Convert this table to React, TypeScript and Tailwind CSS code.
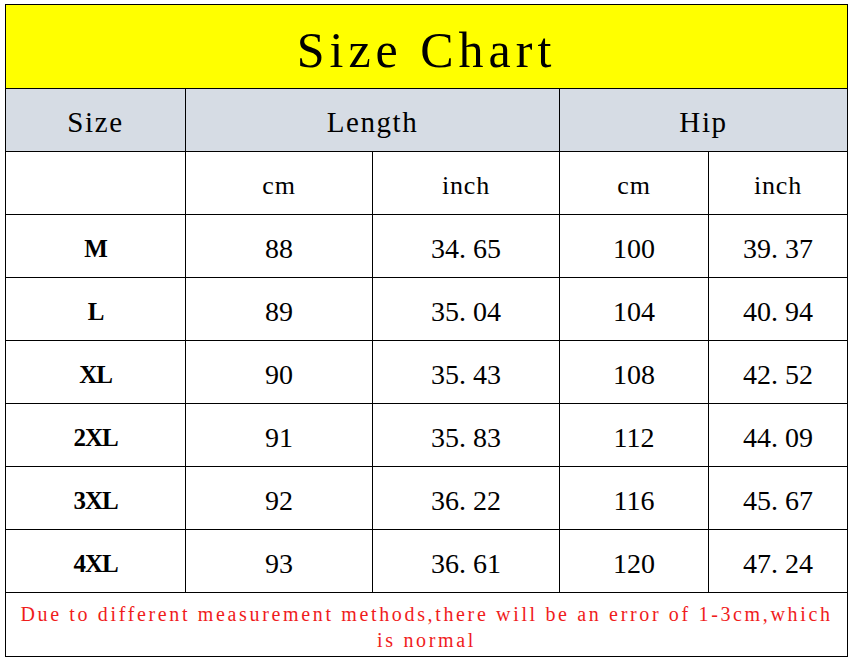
const rows = [
  { size: "M", lenCm: "88", lenIn: "34.65", hipCm: "100", hipIn: "39.37" },
  { size: "L", lenCm: "89", lenIn: "35.04", hipCm: "104", hipIn: "40.94" },
  { size: "XL", lenCm: "90", lenIn: "35.43", hipCm: "108", hipIn: "42.52" },
  { size: "2XL", lenCm: "91", lenIn: "35.83", hipCm: "112", hipIn: "44.09" },
  { size: "3XL", lenCm: "92", lenIn: "36.22", hipCm: "116", hipIn: "45.67" },
  { size: "4XL", lenCm: "93", lenIn: "36.61", hipCm: "120", hipIn: "47.24" },
];

const serif = "font-['Liberation_Serif',serif]";

// decimal with the wide full-width-style dot
function Decimal({ value }: { value: string }) {
  const [a, b] = value.split(".");
  return (
    <span>
      {a}
      <span className="inline-block w-[14px] text-left">.</span>
      {b}
    </span>
  );
}

const cell = "border border-black text-center align-middle p-0";
const head = `${cell} ${serif} text-[29px] tracking-[1.6px] pt-[5px]`;
const unit = `${cell} ${serif} text-[26px] tracking-[0.8px] pt-[5px]`;
const num = `${cell} ${serif} text-[28px] pt-[5px]`;

export default function App() {
  return (
    <div className="w-[850px] h-[659px] bg-white pl-[5px] pt-[4px] overflow-hidden">
      <table className="table-fixed border-collapse w-[842px] text-black">
        <colgroup>
          <col className="w-[180px]" />
          <col className="w-[187px]" />
          <col className="w-[187px]" />
          <col className="w-[149px]" />
          <col className="w-[139px]" />
        </colgroup>
        <tbody>
          <tr className="h-[84px]">
            <td
              colSpan={5}
              className={`${cell} bg-[#ffff00] ${serif} text-[50px] tracking-[5px] pt-[8px]`}
            >
              Size Chart
            </td>
          </tr>
          <tr className="h-[63px] bg-[#d6dce4]">
            <td className={head}>Size</td>
            <td colSpan={2} className={head}>
              Length
            </td>
            <td colSpan={2} className={head}>
              Hip
            </td>
          </tr>
          <tr className="h-[63px]">
            <td className={cell}></td>
            <td className={unit}>cm</td>
            <td className={unit}>inch</td>
            <td className={unit}>cm</td>
            <td className={unit}>inch</td>
          </tr>
          {rows.map((r) => (
            <tr key={r.size} className="h-[63px]">
              <td className={`${cell} ${serif} font-bold text-[25px] tracking-[-1px] pt-[5px]`}>
                {r.size}
              </td>
              <td className={num}>{r.lenCm}</td>
              <td className={num}>
                <Decimal value={r.lenIn} />
              </td>
              <td className={num}>{r.hipCm}</td>
              <td className={num}>
                <Decimal value={r.hipIn} />
              </td>
            </tr>
          ))}
          <tr className="h-[64px]">
            <td
              colSpan={5}
              className={`${cell} ${serif} text-[20px] tracking-[2.65px] leading-[26px] text-[#f01c1c] px-[6px] pt-[4px]`}
            >
              Due to different measurement methods,there will be an error of 1-3cm,which is normal
            </td>
          </tr>
        </tbody>
      </table>
    </div>
  );
}
